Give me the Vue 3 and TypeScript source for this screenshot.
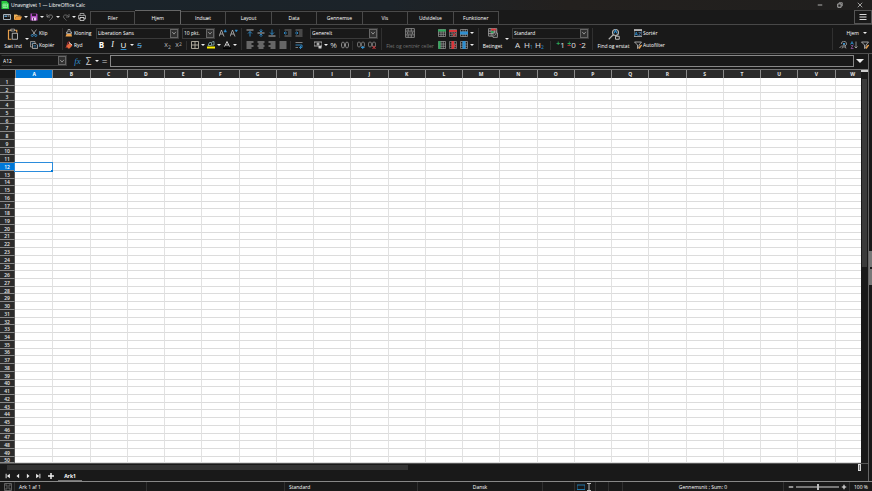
<script setup lang="ts">
import { h, ref, type FunctionalComponent } from 'vue'

interface Shape { d: string; s?: string; f?: string; w?: number }

const G = '#b4b4b4'
const B = '#2f8fd0'
const GR = '#2ea85a'
const R = '#d8383c'
const O = '#e8a04c'
const grid = 'M1 1H15V15H1ZM1 6H15M1 10.500H15M6 1V15M10.500 1V15'

const icons: Record<string, Shape[]> = {
  calc: [{ d: 'M1 0H11L16 5V16H1Z', f: '#28c940' }, { d: 'M4 6H13V13H4ZM4 9.500H13M8 6V13', s: '#d8ffdc' }],
  win: [{ d: 'M1 3H15V13H1Z', s: '#a8b4bc', w: 2 }, { d: 'M3 5H8V8H3Z', f: '#5e9bc4' }, { d: 'M9 5H13V7H9Z', f: G }],
  open: [{ d: 'M0 3H6L8 5H13V7H4L1 14H0Z', f: '#f0b45c' }, { d: 'M4 7H16L13 14H1Z', f: '#ea983a' }],
  save: [{ d: 'M1 1H13L15 3V15H1Z', f: '#b04cc0' }, { d: 'M4 1H12V6H4Z', f: '#2a182e' }, { d: 'M4 9H12V15H4Z', f: '#e6cdea' }, { d: 'M6 10H8V15H6Z', f: '#6a2a74' }],
  undo: [{ d: 'M2 2V8H8M2 8C6 2 14 3 13 8C12 11 9 13 7 15', s: '#8d8d8d', w: 1.600 }],
  redo: [{ d: 'M14 2V8H8M14 8C10 2 2 3 3 8C4 11 7 13 9 15', s: '#777', w: 1.600 }],
  print: [{ d: 'M4 5V1H12V5M1 5H15V12H12V9H4V12H1Z', s: G, w: 1.500 }, { d: 'M4 9H12V15H4Z', s: '#ddd', w: 1.500 }],
  paste: [{ d: 'M6 3H2V15H6M10 3H13V6', s: O, w: 1.600 }, { d: 'M5 1.500H10V4H5Z', s: G }, { d: 'M7 7H14V15H7Z', s: '#ddd' }],
  cut: [{ d: 'M3 1L11 12M13 1L5 12', s: '#ccc', w: 1.400 }, { d: 'M5 11A2 2 0 1 1 4 15A2 2 0 0 1 5 11M11 11A2 2 0 1 1 12 15A2 2 0 0 1 11 11', s: B, w: 1.600 }],
  copy: [{ d: 'M10 4V1H1V12H5', s: G, w: 1.400 }, { d: 'M5 5H12L15 8V15H5Z', s: '#ccc', w: 1.400 }, { d: 'M3 4H8M3 7H4M7 9H12M7 12H13', s: B, w: 1.200 }],
  clone: [{ d: 'M6 1H10V6H13V9H3V6H6Z', s: '#ccc', w: 1.400 }, { d: 'M3 10H13L14 15H1Z', f: O }],
  clear: [{ d: 'M2 14L6 3L8 1L9 5', s: R, w: 1.600 }, { d: 'M3 10L9 4L15 9L9 15H6Z', f: '#e4683c' }, { d: 'M8 3L14 8', s: '#ddd', w: 2 }],
  grow: [{ d: 'M0 15L5 2L10 15M2 10H8', s: G, w: 1.700 }, { d: 'M10 6L12.500 1L15 6Z', s: B, f: B }],
  shrink: [{ d: 'M0 15L5 2L10 15M2 10H8', s: G, w: 1.700 }, { d: 'M10 2H15L12.500 6Z', s: B, f: B }],
  borders: [{ d: 'M1 1H15V15H1ZM8 1V15M1 8H15', s: '#c9c3b4', w: 1.600 }],
  mark: [{ d: 'M2 9L5 3H9V9ZM10 2L14 1V8H10', s: '#8db4b4', w: 1.600 }, { d: 'M0 11H16V15H0Z', f: '#fff200' }],
  color: [{ d: 'M3 11L8 1L13 11M5 8H11', s: '#ddd', w: 1.800 }, { d: 'M0 13H16V16H0Z', f: '#000' }],
  top: [{ d: 'M1 2H15', s: G, w: 2 }, { d: 'M8 15V5M4 9L8 5L12 9', s: B, w: 1.800 }],
  middle: [{ d: 'M1 8H15', s: G, w: 2 }, { d: 'M8 0V6M5 3L8 6L11 3M8 16V10M5 13L8 10L11 13', s: B, w: 1.600 }],
  bottom: [{ d: 'M1 14H15', s: G, w: 2 }, { d: 'M8 1V11M4 7L8 11L12 7', s: B, w: 1.800 }],
  indentL: [{ d: 'M1 2H15M8 6H15M8 10H15M1 14H15', s: '#999', w: 1.500 }, { d: 'M6 8H0M3 5L0 8L3 11', s: B, w: 1.600 }],
  indentR: [{ d: 'M1 2H15M8 6H15M8 10H15M1 14H15', s: '#999', w: 1.500 }, { d: 'M0 8H6M3 5L6 8L3 11', s: B, w: 1.600 }],
  left: [{ d: 'M1 2H15M1 6H11M1 10H15M1 14H11', s: G, w: 2 }],
  center: [{ d: 'M1 2H15M3 6H13M1 10H15M3 14H13', s: G, w: 2 }],
  right: [{ d: 'M1 2H15M5 6H15M1 10H15M5 14H15', s: G, w: 2 }],
  justify: [{ d: 'M1 2H15M1 6H15M1 10H15M1 14H15', s: G, w: 2 }],
  wrap: [{ d: 'M1 3H15M1 13H6', s: '#999', w: 1.600 }, { d: 'M1 8H14V13H9M12 10L9 13L12 16', s: B, w: 1.800 }],
  money: [{ d: 'M0 2H16V10H0Z', s: '#ccc', w: 1.600 }, { d: 'M5 6A3 3 0 1 0 11 6A3 3 0 1 0 5 6', f: '#aaa' }, { d: 'M9 10H15V15H9Z', f: '#ccc' }],
  zeros: [{ d: 'M1 8C1 0 7 0 7 8S1 16 1 8M9 8C9 0 15 0 15 8S9 16 9 8', s: G, w: 1.500 }],
  addDec: [{ d: 'M1 7C1 0 7 0 7 7S1 14 1 7M9 7C9 0 15 0 15 7S9 14 9 7', s: '#aaa', w: 1.400 }, { d: 'M8 13H15M11.500 10V16', s: B, w: 2 }],
  delDec: [{ d: 'M1 7C1 0 7 0 7 7S1 14 1 7M9 7C9 0 15 0 15 7S9 14 9 7', s: '#aaa', w: 1.400 }, { d: 'M9 10L15 16M15 10L9 16', s: R, w: 2 }],
  merge: [{ d: 'M1 1H15V15H1ZM1 5H15M1 11H15M5 1V5M10 1V5M5 11V15M10 11V15', s: '#a0a0a0', w: 1.200 }, { d: 'M3 8H13M5 6L3 8L5 10M11 6L13 8L11 10', s: '#a0a0a0' }],
  rowAdd: [{ d: grid, s: G, w: 1.200 }, { d: 'M0 1H16V5H0Z', f: GR }],
  rowDel: [{ d: grid, s: '#999', w: 1.200 }, { d: 'M0 2H16V6H0Z', f: R }, { d: 'M7 8L14 15M14 8L7 15', s: R, w: 2 }],
  rowSel: [{ d: grid, s: G, w: 1.200 }, { d: 'M0 5H16V11H0Z', f: B }],
  colAdd: [{ d: grid, s: G, w: 1.200 }, { d: 'M1 0H5V16H1Z', f: GR }],
  colDel: [{ d: grid, s: '#999', w: 1.200 }, { d: 'M5 0H10V16H5Z', f: R }, { d: 'M8 6L14 13M14 6L8 13', s: R, w: 2 }],
  colSel: [{ d: grid, s: G, w: 1.200 }, { d: 'M5 0H11V16H5Z', f: B }],
  cond: [{ d: 'M1 1H14V13H1ZM1 5H14M1 9H14M5 1V13M10 1V13', s: '#b8b8b8', w: 1.200 }, { d: 'M5 1H13V4H5Z', f: R }, { d: 'M5 5H9V8H5Z', f: GR }, { d: 'M8 8H15V15H8Z', f: '#222', s: '#ccc' }, { d: 'M10 12L13 10', s: '#ccc' }],
  find: [{ d: 'M6 6A4 4 0 1 1 14 6A4 4 0 1 1 6 6M7 9L1 15', s: G, w: 1.500 }, { d: 'M8 7L10 3L12 7', s: B, w: 1.400 }, { d: 'M10 11H15V15H10Z', s: '#ccc', w: 1.200 }],
  sort: [{ d: 'M0 1H16V15H0Z', s: G, w: 1.600 }, { d: 'M0 1H16V4H0Z', f: G }, { d: 'M2 13L4.500 6L7 13M3 11H6', s: B, w: 1.500 }, { d: 'M9 7H14L9 13H14', s: '#4c7fb4', w: 1.400 }],
  filter: [{ d: 'M1 2H15L10 8V13L7 15V8Z', s: '#ccc', w: 1.500 }, { d: 'M10 15L15 8', s: O, w: 2.600 }],
  findA: [{ d: 'M5 6A5 5 0 1 1 12 10M6 9L1 14', s: G, w: 1.500 }, { d: 'M6 15L10 5L14 15M8 12H13', s: G, w: 1.400 }, { d: 'M8 4H12V7H8Z', f: B }],
  az: [{ d: 'M1 7L4 1L7 7M2 5H6', s: B, w: 1.400 }, { d: 'M2 9H6L2 15H7', s: '#a060b0', w: 1.400 }, { d: 'M12 1V14M9 11L12 14L15 11', s: G, w: 1.500 }],
  menu: [{ d: 'M1 3H15M1 8H15M1 13H15', s: '#ddd', w: 2 }],
  min: [{ d: 'M2 8H14', s: '#ddd', w: 2 }],
  restore: [{ d: 'M2 5H11V14H2Z', s: '#ddd', w: 2 }, { d: 'M5 2H14V11', s: '#ddd', w: 1.600 }],
  close: [{ d: 'M2 2L14 14M14 2L2 14', s: '#ddd', w: 1.800 }],
  chev: [{ d: 'M3 5L8 11L13 5', s: '#aaa', w: 2 }],
  arrow: [{ d: 'M0 4H16L8 12Z', f: '#eee' }],
  first: [{ d: 'M3 2V14', s: '#eee', w: 2.500 }, { d: 'M13 2V14L5 8Z', f: '#eee' }],
  prev: [{ d: 'M11 2V14L4 8Z', f: '#eee' }],
  next: [{ d: 'M5 2V14L12 8Z', f: '#eee' }],
  last: [{ d: 'M13 2V14', s: '#eee', w: 2.500 }, { d: 'M3 2V14L11 8Z', f: '#eee' }],
  plus: [{ d: 'M8 2V14M2 8H14', s: '#eee', w: 3 }],
  minus: [{ d: 'M2 8H14', s: '#eee', w: 3 }],
  disk: [{ d: 'M1 1H15V15H1ZM4 1V6H12V1M4 15V10H12V15', s: '#777', w: 1.500 }],
  rect: [{ d: 'M0 4H16V13H0Z', s: '#2377a8', w: 2 }],
  ibeam: [{ d: 'M4 1H12M8 1V15M4 15H12', s: '#bbb', w: 2 }],
}

const Icon: FunctionalComponent<{ name: string }> = (props) =>
  h('svg', { viewBox: '0 0 16 16', 'aria-hidden': 'true' },
    icons[props.name].map((p) => h('path', {
      d: p.d, fill: p.f ?? 'none', stroke: p.s ?? 'none', 'stroke-width': p.w ?? 1,
    })))
Icon.props = ['name']

const tabs = ['Filer', 'Hjem', 'Indsæt', 'Layout', 'Data', 'Gennemse', 'Vis', 'Udvidelse', 'Funktioner']
const activeTab = ref('Hjem')
const columns = 'ABCDEFGHIJKLMNOPQRSTUVW'.split('')
const rows = Array.from({ length: 50 }, (_, i) => i + 1)
const selected = ref({ col: 'A', row: 12 })
const zoom = ref(50)
</script>

<template>
  <div class="app">
    <header class="title">
      <Icon name="calc" class="i8" />
      <span class="grow">Unavngivet 1 — LibreOffice Calc</span>
      <button class="wbtn" aria-label="Minimer"><Icon name="min" class="i6" /></button>
      <button class="wbtn" aria-label="Gendan"><Icon name="restore" class="i6" /></button>
      <button class="wbtn" aria-label="Luk"><Icon name="close" class="i6" /></button>
    </header>

    <nav class="tabs">
      <div class="quick">
        <button class="b" aria-label="Vindue"><Icon name="win" class="i8" /></button>
        <button class="b" aria-label="Åbn"><Icon name="open" class="i8" /></button>
        <button class="dd" aria-label="Flere filer"><Icon name="arrow" class="i4" /></button>
        <button class="b" aria-label="Gem"><Icon name="save" class="i8" /></button>
        <button class="dd" aria-label="Flere gem"><Icon name="arrow" class="i4" /></button>
        <button class="b" aria-label="Fortryd"><Icon name="undo" class="i8" /></button>
        <button class="dd" aria-label="Flere fortryd"><Icon name="arrow" class="i4" /></button>
        <button class="b" aria-label="Gendan"><Icon name="redo" class="i8" /></button>
        <button class="dd" aria-label="Flere gendan"><Icon name="arrow" class="i4" /></button>
        <button class="b" aria-label="Udskriv"><Icon name="print" class="i8" /></button>
      </div>
      <div class="tablist">
        <button v-for="t in tabs" :key="t" class="tab" :class="{ on: t === activeTab }" @click="activeTab = t">{{ t }}</button>
      </div>
      <button class="burger" aria-label="Menu"><Icon name="menu" class="i8" /></button>
    </nav>

    <section class="ribbon">
      <button class="big paste"><Icon name="paste" class="i12" /><span>Sæt ind</span></button>
      <button class="dd" aria-label="Flere sæt ind"><Icon name="arrow" class="i4" /></button>
      <div class="group clip">
        <button class="lab"><Icon name="cut" class="i8" />Klip</button>
        <button class="lab"><Icon name="copy" class="i8" />Kopiér</button>
      </div>
      <i class="sep"></i>
      <div class="group fmt">
        <button class="lab"><Icon name="clone" class="i8" />Kloning</button>
        <button class="lab"><Icon name="clear" class="i8" />Ryd</button>
      </div>
      <div class="group font">
        <div class="row">
          <label class="combo face"><select aria-label="Skrifttype"><option>Liberation Sans</option></select><span class="drop"><Icon name="chev" class="i6" /></span></label>
          <label class="combo size"><select aria-label="Størrelse"><option>10 pkt.</option></select><span class="drop"><Icon name="chev" class="i6" /></span></label>
          <button class="b" aria-label="Større"><Icon name="grow" class="i8" /></button>
          <button class="b" aria-label="Mindre"><Icon name="shrink" class="i8" /></button>
        </div>
        <div class="row">
          <button class="b glyph"><b>B</b></button>
          <button class="b glyph"><i>I</i></button>
          <button class="b glyph blue"><u>U</u></button>
          <button class="dd" aria-label="Understregning"><Icon name="arrow" class="i4" /></button>
          <button class="b glyph blue"><s>S</s></button>
          <span class="space"></span>
          <button class="b script">x<small>2</small></button>
          <button class="b script up">x<small>2</small></button>
          <i class="sep"></i>
          <button class="b" aria-label="Kanter"><Icon name="borders" class="i8" /></button>
          <button class="dd" aria-label="Flere kanter"><Icon name="arrow" class="i4" /></button>
          <button class="b" aria-label="Fremhævning"><Icon name="mark" class="i8" /></button>
          <button class="dd" aria-label="Flere baggrunde"><Icon name="arrow" class="i4" /></button>
          <button class="b" aria-label="Skriftfarve"><Icon name="color" class="i8" /></button>
          <button class="dd" aria-label="Flere farver"><Icon name="arrow" class="i4" /></button>
        </div>
      </div>
      <i class="sep"></i>
      <div class="group">
        <div class="row">
          <button v-for="n in ['top', 'middle', 'bottom']" :key="n" class="b" :aria-label="n"><Icon :name="n" class="i8" /></button>
          <i class="sep"></i>
          <button v-for="n in ['indentL', 'indentR']" :key="n" class="b" :aria-label="n"><Icon :name="n" class="i8" /></button>
        </div>
        <div class="row">
          <button v-for="n in ['left', 'center', 'right', 'justify']" :key="n" class="b" :aria-label="n"><Icon :name="n" class="i8" /></button>
          <i class="sep"></i>
          <button class="b" aria-label="Ombryd"><Icon name="wrap" class="i8" /></button>
        </div>
      </div>
      <div class="group number">
        <div class="row">
          <label class="combo fill"><select aria-label="Talformat"><option>Generelt</option></select><span class="drop"><Icon name="chev" class="i6" /></span></label>
        </div>
        <div class="row inset">
          <button class="b" aria-label="Valuta"><Icon name="money" class="i8" /></button>
          <button class="dd" aria-label="Flere valutaer"><Icon name="arrow" class="i4" /></button>
          <button class="b percent">%</button>
          <button class="b" aria-label="Tal"><Icon name="zeros" class="i8" /></button>
          <i class="sep"></i>
          <button class="b" aria-label="Tilføj decimal"><Icon name="addDec" class="i8" /></button>
          <button class="b" aria-label="Slet decimal"><Icon name="delDec" class="i8" /></button>
        </div>
      </div>
      <i class="sep"></i>
      <button class="big merge"><Icon name="merge" class="i10" /><span>Flet og centrér celler</span></button>
      <div class="group">
        <div class="row">
          <button v-for="n in ['rowAdd', 'rowDel', 'rowSel']" :key="n" class="b" :aria-label="n"><Icon :name="n" class="i8" /></button>
          <button class="dd wide" aria-label="Rækker"><Icon name="arrow" class="i4" /></button>
        </div>
        <div class="row">
          <button v-for="n in ['colAdd', 'colDel', 'colSel']" :key="n" class="b" :aria-label="n"><Icon :name="n" class="i8" /></button>
          <button class="dd wide" aria-label="Kolonner"><Icon name="arrow" class="i4" /></button>
        </div>
      </div>
      <i class="sep"></i>
      <button class="big cond"><Icon name="cond" class="i10" /><span>Betinget</span></button>
      <button class="dd wide" aria-label="Flere betingelser"><Icon name="arrow" class="i4" /></button>
      <div class="group styles">
        <div class="row">
          <label class="combo fill"><select aria-label="Typografi"><option>Standard</option></select><span class="drop"><Icon name="chev" class="i6" /></span></label>
        </div>
        <div class="row">
          <button class="b glyph soft">A</button>
          <button class="b glyph soft">H<small>1</small></button>
          <button class="b glyph soft">H<small>2</small></button>
          <i class="sep far"></i>
          <button class="b glyph soft"><em class="green">+</em>1</button>
          <button class="b glyph soft"><em class="mixed">±</em>0</button>
          <button class="b glyph soft"><em class="red">-</em>2</button>
        </div>
      </div>
      <i class="sep"></i>
      <button class="big find"><Icon name="find" class="i12" /><span>Find og erstat</span></button>
      <div class="group grow">
        <button class="lab"><Icon name="sort" class="i8" />Sortér</button>
        <button class="lab"><Icon name="filter" class="i8" />Autofilter</button>
      </div>
      <i class="sep"></i>
      <div class="group context">
        <button class="lab home">Hjem<Icon name="arrow" class="i4" /></button>
        <div class="row">
          <button v-for="n in ['findA', 'az', 'filter']" :key="n" class="b" :aria-label="n"><Icon :name="n" class="i8" /></button>
        </div>
      </div>
    </section>

    <div class="work">
      <div class="main">
        <div class="formula">
          <label class="combo name"><input aria-label="Navneboks" :value="selected.col + selected.row"><span class="drop"><Icon name="chev" class="i6" /></span></label>
          <button class="fx">fx</button>
          <button class="b sum">Σ</button>
          <button class="dd" aria-label="Flere funktioner"><Icon name="arrow" class="i4" /></button>
          <button class="b sum">=</button>
          <input class="line" aria-label="Inputlinje">
          <button class="expand" aria-label="Udvid"><Icon name="arrow" class="i8" /></button>
        </div>
        <div class="sheet">
          <table>
            <thead>
              <tr><th></th><th v-for="c in columns" :key="c" :class="{ sel: c === selected.col }">{{ c }}</th></tr>
            </thead>
            <tbody>
              <tr v-for="r in rows" :key="r">
                <th :class="{ sel: r === selected.row }">{{ r }}</th>
                <td v-for="c in columns" :key="c" :class="{ cur: c === selected.col && r === selected.row }" @click="selected = { col: c, row: r }"></td>
              </tr>
            </tbody>
          </table>
          <div class="vscroll"><div class="vthumb"></div></div>
        </div>
        <div class="hscroll"><div class="hthumb"></div><div class="split"></div></div>
        <div class="sheets">
          <button v-for="n in ['first', 'prev', 'next', 'last']" :key="n" class="nav" :aria-label="n"><Icon :name="n" class="i6" /></button>
          <button class="nav add" aria-label="Tilføj ark"><Icon name="plus" class="i8" /></button>
          <button class="sheettab">Ark1</button>
        </div>
      </div>
      <aside class="side"><button class="handle" aria-label="Vis sidepanel"><span class="grip"></span></button></aside>
    </div>

    <footer class="status">
      <span class="cell"><Icon name="disk" class="i8" /></span>
      <span class="cell">Ark 1 af 1</span>
      <span class="cell"></span>
      <span class="cell">Standard</span>
      <span class="cell mid">Dansk</span>
      <span class="cell"></span>
      <span class="cell mid"><Icon name="rect" class="i8" /><Icon name="ibeam" class="i8" /></span>
      <span class="cell"></span>
      <span class="cell"></span>
      <span class="cell mid">Gennemsnit ; Sum: 0</span>
      <span class="cell zoom">
        <button aria-label="Zoom ud"><Icon name="minus" class="i6" /></button>
        <input v-model="zoom" type="range" min="0" max="100" aria-label="Zoom">
        <button aria-label="Zoom ind"><Icon name="plus" class="i6" /></button>
      </span>
      <span class="cell mid">100 %</span>
    </footer>
  </div>
</template>

<style>
body { margin: 0; background: #191919; }
</style>

<style scoped>
* { box-sizing: border-box; }
.app {
  display: flex; flex-direction: column; height: 100vh; overflow: hidden;
  background: #191919; color: #fff;
  font: 500 5px/8px "Open Sans", "Noto Sans", sans-serif; white-space: nowrap;
}
button, input, select {
  font: inherit; color: inherit; background: none; border: 0; padding: 0; margin: 0;
  border-radius: 0; outline: 0; min-width: 0;
}
button { display: flex; align-items: center; justify-content: center; }
svg { display: block; flex: none; }
.i4 { width: 4px; height: 4px; }
.i6 { width: 6px; height: 6px; }
.i8 { width: 8px; height: 8px; }
.i10 { width: 10px; height: 10px; }
.i12 { width: 12px; height: 12px; }
.grow { flex: 1; }

.title {
  display: flex; align-items: center; height: 10px; padding: 0 2px 0 1px; flex: none;
  background: linear-gradient(90deg, #19232a, #1c2329 45%, #23201e 65%, #201f1e);
}
.title .grow { padding-left: 2px; }
.wbtn { width: 20px; height: 10px; }

.tabs { display: flex; align-items: flex-end; height: 14px; flex: none; }
.quick { display: flex; align-items: center; width: 90px; height: 14px; padding-left: 1px; }
.tablist { display: grid; grid-template-columns: repeat(9, 1fr); width: 409px; align-items: end; margin-right: auto; align-self: stretch; }
.tab { height: 13px; border: 1px solid #4a4a4a; border-left-width: 0; border-bottom-width: 0; }
.tab:first-child { border-left-width: 1px; }
.tab.on { height: 14px; border-color: #666; }
.burger { width: 18px; height: 14px; border: 1px solid #555; }

.ribbon { display: flex; align-items: center; height: 30px; flex: none; padding-left: 2px; border-top: 1px solid #484848; border-bottom: 1px solid #505050; }
.group { display: flex; flex-direction: column; flex: none; }
.group.grow { flex: 1; }
.row { display: flex; align-items: center; height: 12px; }
.row.inset { padding-left: 2px; }
.b { width: 11px; height: 11px; flex: none; }
.dd { width: 5px; height: 11px; flex: none; }
.dd.wide { width: 6px; }
.sep { width: 6px; height: 22px; flex: none; background: linear-gradient(#303030, #303030) center / 1px 100% no-repeat; }
.row .sep { height: 9px; width: 5px; }
.row .sep.far { width: 10px; }
.space { width: 17px; }
.lab { display: flex; justify-content: flex-start; gap: 1px; height: 12px; }
.big { display: flex; flex-direction: column; height: 22px; flex: none; justify-content: space-between; }
.paste { width: 22px; }
.clip { width: 29px; margin-left: 1px; }
.fmt { width: 31px; }
.font { width: 142px; }
.number { width: 68px; margin-left: 6px; }
.merge { width: 52px; color: #757575; }
.cond { width: 23px; }
.styles { width: 77px; margin-left: 2px; }
.find { width: 37px; margin-right: 2px; }
.context { width: 36px; padding-left: 1px; margin-left: 1px; }
.home { justify-content: flex-end; gap: 4px; padding-right: 5px; }

.combo { display: flex; height: 11px; border: 1px solid #3a3a3a; background: #191919; flex: none; }
.combo select, .combo input { flex: 1; width: 0; height: 9px; padding-left: 1px; appearance: none; }
.combo.face { width: 83px; margin-right: 3px; }
.combo.size { width: 33px; margin-right: 2px; }
.combo.fill { width: 100%; }
.combo.name { width: 66px; border-left-color: #191919; margin-right: 5px; }
.drop { display: flex; align-items: center; justify-content: center; width: 8px; background: #303030; border: 1px solid #666; }

.glyph { font-size: 8px; }
.glyph i { font-family: "Liberation Serif", serif; }
.glyph small { font-size: 5px; color: #2f8fd0; align-self: flex-end; }
.glyph em { font-size: 7px; font-style: normal; font-weight: 700; align-self: flex-start; }
.blue u, .blue s { text-decoration-color: #2f8fd0; text-decoration-thickness: 1px; }
.blue s { color: #8fb8d4; }
.soft { color: #e0e0e0; }
.percent { font-size: 8px; color: #d8d8d8; }
.green { color: #2ea85a; }
.red { color: #e0393e; }
.mixed { color: transparent; background: linear-gradient(#2ea85a 60%, #e0393e 60%); background-clip: text; }
.script { font-size: 7px; color: #b0b0b0; }
.script small { font-size: 5px; align-self: flex-end; }
.script.up small { align-self: flex-start; }

.work { display: flex; flex: 1; min-height: 0; }
.main { display: flex; flex-direction: column; flex: 1; min-width: 0; }
.formula { display: flex; align-items: center; height: 15px; flex: none; padding: 0 0 2px 1px; }
.fx { width: 11px; color: #2f8fd0; font: italic 9px/10px "Liberation Serif", serif; }
.sum { font-size: 10px; color: #ccc; }
.line { flex: 1; height: 12px; border: 1px solid #888; }
.expand { width: 14px; justify-content: flex-start; padding-left: 2px; }

.sheet { display: flex; flex: 1; min-height: 0; border-top: 1px solid #777; border-bottom: 1px solid #555; }
table { display: flex; flex-direction: column; flex: 1; min-width: 0; background: #fff; }
thead { display: block; height: 8px; flex: none; }
tbody { display: grid; grid-template-rows: repeat(49, minmax(0, 100fr)) minmax(0, 80fr); flex: 1; min-height: 0; overflow: hidden; }
tr { display: grid; grid-template-columns: 15px repeat(22, minmax(0, 100fr)) minmax(0, 71fr); min-height: 0; height: 100%; }
th { display: flex; align-items: center; justify-content: center; padding: 0; background: #2b2b2b; color: #e4e4e4; font-weight: 700; line-height: 6px; overflow: hidden; }
thead th { border-left: 1px solid #8a8a8a; }
thead th:first-child { border-left: 0; background: #191919; }
thead th:last-child { padding-left: 9px; }
tbody th { padding-top: 1px; border-bottom: 1px solid #888; border-right: 1px solid #555; font-weight: 600; }
th.sel { background: #0078d7; color: #fff; }
td { padding: 0; border-left: 1px solid #e2e2e2; border-bottom: 1px solid #dcdcdc; }
td:nth-child(2) { border-left: 0; }
td.cur { position: relative; box-shadow: 0 0 0 1px #2b8cdc; border-color: #2b8cdc; border-bottom: 0; }
td.cur::after { content: ""; position: absolute; right: -1px; bottom: -1px; width: 2px; height: 2px; background: #0078d7; }
.vscroll { display: flex; flex-direction: column; width: 7px; border-top: 2px solid #ccc; padding: 7px 1px 0; }
.vthumb { height: 49%; background: #3a3a3a; }

.hscroll { display: flex; align-items: center; justify-content: space-between; height: 7px; flex: none; padding: 0 7px; }
.hthumb { width: 47%; height: 5px; background: #333; }
.split { width: 3px; height: 7px; border: 1px solid #ddd; background: #777; }
.sheets { display: flex; align-items: center; height: 10px; flex: none; padding-left: 3px; }
.nav { width: 10px; height: 10px; }
.nav.add { width: 15px; }
.sheettab { width: 24px; height: 10px; font-weight: 700; border-bottom: 1px solid #777; }

.side { display: flex; align-items: center; width: 4px; border-left: 1px solid #666; }
.handle { width: 3px; height: 34px; background: #777; }
.grip { width: 2px; height: 2px; background: #191919; }

.status {
  display: grid; grid-template-columns: 15fr 132fr 138fr 133fr 125fr 32fr 21fr 13fr 14fr 161fr 66fr 22fr;
  height: 10px; flex: none; border-top: 1px solid #888; align-items: center;
}
.cell { display: flex; align-items: center; height: 9px; min-width: 0; padding-left: 4px; border-right: 1px solid #303030; }
.cell:last-child { border-right: 0; }
.cell.mid { justify-content: center; padding-left: 0; }
.cell.zoom { gap: 2px; padding-right: 2px; }
.zoom input { flex: 1; height: 7px; appearance: none; }
.zoom input::-webkit-slider-runnable-track { height: 2px; background: #777; }
.zoom input::-webkit-slider-thumb { appearance: none; width: 2px; height: 6px; margin-top: -2px; background: #bbb; }
</style>
